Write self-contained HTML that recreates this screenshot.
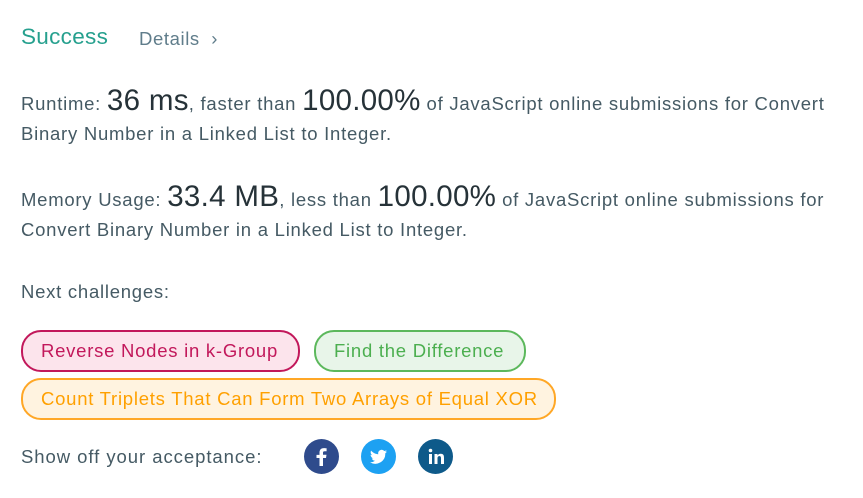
<!DOCTYPE html>
<html><head><meta charset="utf-8"><style>
body{margin:0;width:863px;height:498px;background:#fff;font-family:"Liberation Sans",sans-serif;color:#455a64;position:relative;overflow:hidden}
.a{position:absolute;white-space:nowrap}
.big{font-size:29.5px;color:#263238;letter-spacing:0.3px}
.p{font-size:18.5px;line-height:30px;letter-spacing:0.75px}
.pill{position:absolute;height:38px;border:2px solid;border-radius:20px;font-size:18.5px;line-height:38px;padding-left:18px;box-sizing:content-box;letter-spacing:0.75px;white-space:nowrap}
.ic{position:absolute;width:35px;height:35px;border-radius:50%;top:439px}
</style></head><body>
<div class="a" style="left:21px;top:24px;font-size:22.5px;color:#26a08e;letter-spacing:0.3px">Success</div>
<div class="a" style="left:139px;top:28px;font-size:18.5px;color:#607d8b;letter-spacing:0.6px">Details&nbsp; ›</div>
<div class="a p" style="left:21px;top:86px">Runtime: <span class="big">36 ms</span>, faster than <span class="big">100.00%</span> of JavaScript online submissions for Convert<br>Binary Number in a Linked List to Integer.</div>
<div class="a p" style="left:21px;top:182px">Memory Usage: <span class="big">33.4 MB</span>, less than <span class="big">100.00%</span> of JavaScript online submissions for<br>Convert Binary Number in a Linked List to Integer.</div>
<div class="a p" style="left:21px;top:277px">Next challenges:</div>
<div class="pill" style="left:21px;top:330px;width:257px;border-color:#c2185b;background:#fce4ec;color:#c2185b">Reverse Nodes in k-Group</div>
<div class="pill" style="left:314px;top:330px;width:190px;border-color:#5cb85c;background:#e8f5e9;color:#4caf50">Find the Difference</div>
<div class="pill" style="left:21px;top:378px;width:513px;border-color:#ffa726;background:#fff3e0;color:#ffa000">Count Triplets That Can Form Two Arrays of Equal XOR</div>
<div class="a p" style="left:21px;top:442px;letter-spacing:0.95px">Show off your acceptance:</div>
<div class="ic" style="left:304px;background:#2f4b8c"><svg width="35" height="35" viewBox="0 0 35 35"><path d="M19 27v-8h3l.5-3.2H19v-2c0-1 .3-1.6 1.7-1.6H22.6V9.3c-.4 0-1.5-.2-2.7-.2-2.7 0-4.4 1.6-4.4 4.5v2.3h-3V19h3v8z" fill="#fff"/></svg></div>
<div class="ic" style="left:361px;background:#1da1f2"><svg width="35" height="35" viewBox="0 0 35 35"><path d="M26 12.5c-.6.3-1.3.5-2 .6.7-.4 1.3-1.1 1.5-1.9-.7.4-1.4.7-2.2.8a3.5 3.5 0 0 0-6 3.2c-2.9-.1-5.5-1.5-7.2-3.6-.9 1.6-.4 3.6 1.1 4.6-.6 0-1.1-.2-1.600-.4 0 1.7 1.2 3.2 2.8 3.5-.5.1-1 .2-1.6.1.4 1.4 1.8 2.4 3.3 2.4A7 7 0 0 1 9 23.2 10 10 0 0 0 24.3 14.3c.7-.5 1.3-1.1 1.7-1.8z" fill="#fff"/></svg></div>
<div class="ic" style="left:418px;background:#0e5a8a"><svg width="35" height="35" viewBox="0 0 35 35"><rect x="11" y="15" width="3" height="10" fill="#fff"/><circle cx="12.5" cy="11.5" r="1.8" fill="#fff"/><path d="M16.5 15h3v1.5c.5-1 1.7-1.8 3.2-1.8 3 0 3.3 2 3.3 4.3V25h-3v-5.3c0-1.3 0-2.6-1.6-2.6s-1.9 1.2-1.9 2.5V25h-3z" fill="#fff"/></svg></div>
</body></html>
